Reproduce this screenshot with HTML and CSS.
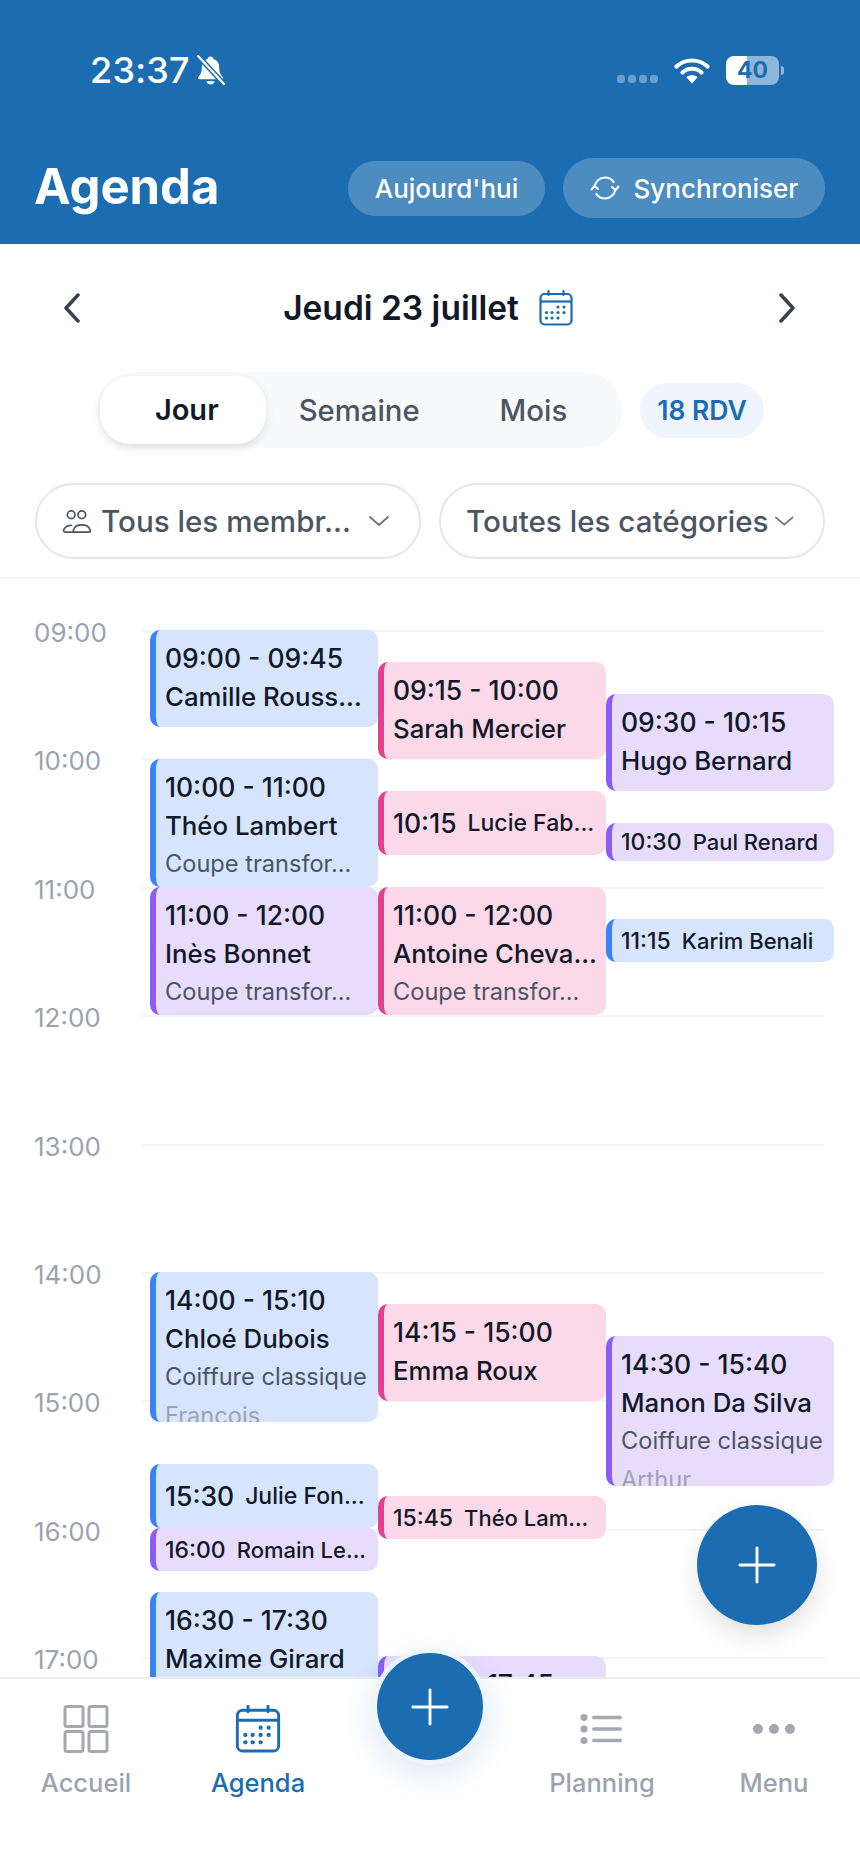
FILE: index.html
```html
<!DOCTYPE html>
<html lang="fr">
<head>
  <meta charset="UTF-8" />
  <meta name="viewport" content="width=device-width, initial-scale=1.0" />
  <title>Agenda</title>
  <link rel="stylesheet" href="styles.css">
</head>
<body>
  <div class="app">

    <header class="top">
      <div class="status">
        <div class="status-left">
          <span class="clock">23:37</span>
          <svg class="bell" viewBox="0 0 30 30">
            <path d="M15 1.500c-1.600 0-2.600 1-2.800 2.400C8.600 5 6.600 8 6.600 12c0 4.500-1.200 7-3.400 9.300-.8.9-.3 2.200 1 2.200h21.600c1.300 0 1.800-1.300 1-2.200-2.200-2.300-3.400-4.800-3.400-9.300 0-4-2-7-5.600-8.100C17.600 2.500 16.600 1.500 15 1.500z" fill="#fff"/>
            <path d="M11 25.500h8c-.4 2-2 3-4 3s-3.600-1-4-3z" fill="#fff"/>
            <path d="M3 1l25 27" stroke="#1b6cb0" stroke-width="5" fill="none"/>
            <path d="M3 1l25 27" stroke="#fff" stroke-width="2.200" fill="none" stroke-linecap="round"/>
          </svg>
        </div>
        <div class="status-right">
          <div class="signal"><i></i><i></i><i></i><i></i></div>
          <svg class="wifi" viewBox="0 0 36 27">
            <path d="M2.500 9.500C11 1.500 25 1.500 33.500 9.500" stroke="#fff" stroke-width="4.200" fill="none" stroke-linecap="round"/>
            <path d="M8.500 15.500c5.400-5 13.600-5 19 0" stroke="#fff" stroke-width="4.200" fill="none" stroke-linecap="round"/>
            <path d="M18 26.500l-5.600-6.200c3.200-2.600 8-2.600 11.200 0z" fill="#fff"/>
          </svg>
          <div class="battery"><span>40</span></div>
          <div class="battery-tip"></div>
        </div>
      </div>
      <div class="top-bar">
        <h1>Agenda</h1>
        <div class="top-actions">
          <button class="top-btn btn-today">Aujourd'hui</button>
          <button class="top-btn btn-sync">
            <svg class="sync-icon" viewBox="0 0 30 30" fill="none" stroke="#fff" stroke-width="2" stroke-linecap="round" stroke-linejoin="round">
              <path d="M4.500 13.500C5.500 8 10 4.500 15 4.500c3.600 0 6.700 1.700 8.700 4.600"/>
              <path d="M25.500 16.500c-1 5.500-5.500 9-10.500 9-3.600 0-6.700-1.700-8.700-4.600"/>
              <path d="M1.500 16.500l3-3.500 3.500 3"/>
              <path d="M28.500 13.500l-3 3.500-3.500-3"/>
            </svg>
            Synchroniser
          </button>
        </div>
      </div>
    </header>

    <div class="date-row">
      <svg class="chevron" viewBox="0 0 18 30"><path d="M15 2L3 15l12 13"/></svg>
      <div class="date-title">
        <span>Jeudi 23 juillet</span>
        <svg class="cal-small" viewBox="0 0 34 36">
          <use href="#cal"/>
        </svg>
      </div>
      <svg class="chevron" viewBox="0 0 18 30"><path d="M3 2l12 13L3 28"/></svg>
    </div>

    <div class="view-row">
      <div class="segments">
        <div class="segment active">Jour</div>
        <div class="segment week">Semaine</div>
        <div class="segment">Mois</div>
      </div>
      <div class="count">18 RDV</div>
    </div>

    <div class="filters">
      <div class="select select-members">
        <svg class="people" viewBox="0 0 30 26" fill="none" stroke="#4b5563" stroke-width="1.800" stroke-linecap="round" stroke-linejoin="round">
          <circle cx="9.500" cy="6" r="4"/>
          <circle cx="20.500" cy="6" r="4"/>
          <path d="M11 24H3.500c-2 0-2.500-1.500-1.500-3 1.200-2.200 3.500-4 7.500-4"/>
          <path d="M11 24h17c1.200 0 1.500-1 1-2.500-1-3-4-5-8.500-5s-7.500 2-8.500 5c-.5 1 0 2.500-1 2.500z"/>
        </svg>
        <span class="select-text">Tous les membr...</span>
        <svg class="caret" viewBox="0 0 22 12"><path d="M2 2l9 8 9-8"/></svg>
      </div>
      <div class="select select-categories">
        <span class="select-text">Toutes les catégories</span>
        <svg class="caret" viewBox="0 0 22 12"><path d="M2 2l9 8 9-8"/></svg>
      </div>
    </div>

    <div class="calendar">
      <div class="hours">
        <div class="hour"><span>09:00</span></div>
        <div class="hour"><span>10:00</span></div>
        <div class="hour"><span>11:00</span></div>
        <div class="hour"><span>12:00</span></div>
        <div class="hour"><span>13:00</span></div>
        <div class="hour"><span>14:00</span></div>
        <div class="hour"><span>15:00</span></div>
        <div class="hour"><span>16:00</span></div>
        <div class="hour"><span>17:00</span></div>
      </div>

      <div class="event blue col1" style="top:51px;height:97px">
        <div class="ev-time">09:00 - 09:45</div>
        <div class="ev-name">Camille Rouss...</div>
      </div>
      <div class="event pink col2" style="top:83px;height:97px">
        <div class="ev-time">09:15 - 10:00</div>
        <div class="ev-name">Sarah Mercier</div>
      </div>
      <div class="event purple col3" style="top:115px;height:97px">
        <div class="ev-time">09:30 - 10:15</div>
        <div class="ev-name">Hugo Bernard</div>
      </div>
      <div class="event blue col1" style="top:180px;height:128px">
        <div class="ev-time">10:00 - 11:00</div>
        <div class="ev-name">Théo Lambert</div>
        <div class="ev-sub">Coupe transfor...</div>
      </div>
      <div class="event pink col2 compact" style="top:212px;height:64px">
        <b>10:15</b><span>Lucie Fab...</span>
      </div>
      <div class="event purple col3 compact small" style="top:244px;height:38px">
        <b>10:30</b><span>Paul Renard</span>
      </div>
      <div class="event purple col1" style="top:308px;height:128px">
        <div class="ev-time">11:00 - 12:00</div>
        <div class="ev-name">Inès Bonnet</div>
        <div class="ev-sub">Coupe transfor...</div>
      </div>
      <div class="event pink col2" style="top:308px;height:128px">
        <div class="ev-time">11:00 - 12:00</div>
        <div class="ev-name">Antoine Cheva...</div>
        <div class="ev-sub">Coupe transfor...</div>
      </div>
      <div class="event blue col3 compact small" style="top:340px;height:43px">
        <b>11:15</b><span>Karim Benali</span>
      </div>
      <div class="event blue col1" style="top:693px;height:150px">
        <div class="ev-time">14:00 - 15:10</div>
        <div class="ev-name">Chloé Dubois</div>
        <div class="ev-sub">Coiffure classique</div>
        <div class="ev-staff">François</div>
      </div>
      <div class="event pink col2" style="top:725px;height:97px">
        <div class="ev-time">14:15 - 15:00</div>
        <div class="ev-name">Emma Roux</div>
      </div>
      <div class="event purple col3" style="top:757px;height:150px">
        <div class="ev-time">14:30 - 15:40</div>
        <div class="ev-name">Manon Da Silva</div>
        <div class="ev-sub">Coiffure classique</div>
        <div class="ev-staff">Arthur</div>
      </div>
      <div class="event blue col1 compact" style="top:885px;height:64px">
        <b>15:30</b><span>Julie Fon...</span>
      </div>
      <div class="event pink col2 compact small" style="top:917px;height:43px">
        <b>15:45</b><span>Théo Lam...</span>
      </div>
      <div class="event purple col1 compact small" style="top:949px;height:43px">
        <b>16:00</b><span>Romain Le...</span>
      </div>
      <div class="event blue col1" style="top:1013px;height:128px">
        <div class="ev-time">16:30 - 17:30</div>
        <div class="ev-name">Maxime Girard</div>
      </div>
      <div class="event purple col2" style="top:1077px;height:97px">
        <div class="ev-time">17:00 - 17:45</div>
      </div>
    </div>

    <nav class="tabs">
      <div class="tab">
        <svg class="tab-icon" viewBox="0 0 48 48" fill="none" stroke="#a3a8b3" stroke-width="3">
          <rect x="3" y="1.500" width="18" height="20" rx="2"/>
          <rect x="27" y="1.500" width="18" height="20" rx="2"/>
          <rect x="3" y="26.500" width="18" height="20" rx="2"/>
          <rect x="27" y="26.500" width="18" height="20" rx="2"/>
        </svg>
        <span>Accueil</span>
      </div>
      <div class="tab current">
        <svg class="tab-icon" viewBox="0 0 34 36"><use href="#cal"/></svg>
        <span>Agenda</span>
      </div>
      <div class="tab"></div>
      <div class="tab">
        <svg class="tab-icon" viewBox="0 0 48 48" fill="#a3a8b3">
          <circle cx="6" cy="12.500" r="3.500"/><circle cx="6" cy="24" r="3.500"/><circle cx="6" cy="35.500" r="3.500"/>
          <rect x="14" y="10.800" width="30" height="3.400" rx="1.700"/>
          <rect x="14" y="22.300" width="30" height="3.400" rx="1.700"/>
          <rect x="14" y="33.800" width="30" height="3.400" rx="1.700"/>
        </svg>
        <span>Planning</span>
      </div>
      <div class="tab">
        <svg class="tab-icon" viewBox="0 0 48 48" fill="#a3a8b3">
          <circle cx="8" cy="24" r="5"/><circle cx="24" cy="24" r="5"/><circle cx="40" cy="24" r="5"/>
        </svg>
        <span>Menu</span>
      </div>
    </nav>

    <div class="fab fab-float">
      <svg viewBox="0 0 40 40"><path d="M20 2v36M2 20h36"/></svg>
    </div>
    <div class="fab fab-tab">
      <svg viewBox="0 0 40 40"><path d="M20 2v36M2 20h36"/></svg>
    </div>
  </div>

  <svg class="defs" width="0" height="0">
    <symbol id="cal" viewBox="0 0 34 36">
      <path d="M9.500 1v4M24.500 1v4" stroke="#1b6cb0" stroke-width="2.200" stroke-linecap="round" fill="none"/>
      <rect x="1.500" y="4" width="31" height="30.500" rx="4" stroke="#1b6cb0" stroke-width="2.200" fill="none"/>
      <path d="M1.500 11.500h31" stroke="#1b6cb0" stroke-width="2.200" fill="none"/>
      <g fill="#1b6cb0">
        <circle cx="19" cy="17" r="1.600"/><circle cx="25" cy="17" r="1.600"/>
        <circle cx="7.500" cy="22.500" r="1.600"/><circle cx="13" cy="22.500" r="1.600"/><circle cx="19" cy="22.500" r="1.600"/><circle cx="25" cy="22.500" r="1.600"/>
        <circle cx="7.500" cy="28" r="1.600"/><circle cx="13" cy="28" r="1.600"/><circle cx="19" cy="28" r="1.600"/>
      </g>
    </symbol>
  </svg>
</body>
</html>
```

FILE: styles.css
```css
/* Page */
html, body {
  margin: 0;
  padding: 0;
}

body {
  font-family: Inter, "Liberation Sans", sans-serif;
  color: #111827;
  background-color: #fff;
}

.app {
  position: relative;
  width: 860px;
  height: 1869px;
  overflow: hidden;
  display: flex;
  flex-direction: column;
}

.defs {
  position: absolute;
}

/* Blue header */
.top {
  background-color: #1b6cb0;
  height: 244px;
  flex: none;
  color: #fff;
}

.status {
  display: flex;
  justify-content: space-between;
  padding: 50px 76px 0 90px;
  height: 40px;
}

.status-left {
  display: flex;
  align-items: center;
  gap: 5px;
}

.clock {
  font-size: 36px;
  font-weight: 500;
  line-height: 40px;
  letter-spacing: 0.2px;
}

.bell {
  width: 31px;
  height: 31px;
}

.status-right {
  display: flex;
  align-items: center;
}

.signal {
  display: flex;
  gap: 3px;
  margin: 18px 16px 0 0;
}

.signal i {
  width: 8px;
  height: 8px;
  border-radius: 3px;
  background-color: rgba(255, 255, 255, 0.35);
}

.wifi {
  width: 36px;
  height: 27px;
  margin-right: 16px;
}

.battery {
  width: 53px;
  height: 29px;
  border-radius: 8px;
  background: linear-gradient(to right, #fff 0, #fff 40%, rgba(255, 255, 255, 0.5) 40%);
  color: #1b6cb0;
  font-size: 23px;
  font-weight: 700;
  line-height: 29px;
  text-align: center;
}

.battery-tip {
  width: 3px;
  height: 9px;
  margin-left: 2px;
  border-radius: 0 3px 3px 0;
  background-color: rgba(255, 255, 255, 0.5);
}

.top-bar {
  display: flex;
  justify-content: space-between;
  align-items: center;
  padding: 68px 35px 0 34px;
}

.top-bar h1 {
  margin: -3px 0 0;
  font-size: 49px;
  font-weight: 700;
  line-height: 60px;
}

.top-actions {
  display: flex;
  align-items: center;
  gap: 18px;
}

.top-btn {
  display: flex;
  align-items: center;
  justify-content: center;
  border: none;
  border-radius: 28px;
  background-color: rgba(255, 255, 255, 0.22);
  color: #fff;
  font-family: inherit;
  font-size: 26px;
  font-weight: 500;
  padding: 0;
}

.btn-today {
  width: 197px;
  height: 55px;
}

.btn-sync {
  width: 262px;
  height: 60px;
  border-radius: 30px;
  gap: 14px;
}

.sync-icon {
  width: 30px;
  height: 30px;
}

/* Date row */
.date-row {
  display: flex;
  align-items: center;
  justify-content: space-between;
  height: 36px;
  padding: 46px 64px 0 63px;
  flex: none;
}

.chevron {
  width: 18px;
  height: 30px;
  fill: none;
  stroke: #374151;
  stroke-width: 3.500;
  stroke-linecap: round;
  stroke-linejoin: round;
}

.date-title {
  display: flex;
  align-items: center;
  gap: 20px;
  margin-right: 3px;
  font-size: 33.500px;
  font-weight: 600;
}

.cal-small {
  width: 34px;
  height: 36px;
}

/* Jour / Semaine / Mois */
.view-row {
  display: flex;
  align-items: center;
  padding: 46px 0 0 97px;
  gap: 18px;
  flex: none;
}

.segments {
  display: flex;
  align-items: center;
  width: 525px;
  height: 76px;
  border-radius: 38px;
  background-color: #f8f9fb;
  box-sizing: border-box;
  padding: 0 3px;
  font-size: 29.300px;
  font-weight: 500;
  color: #4b5563;
}

.segment {
  width: 175px;
  text-align: center;
}

.segment.week {
  width: 181px;
}

.segment.active {
  box-sizing: border-box;
  width: 169px;
  height: 68px;
  margin-right: 5px;
  padding-left: 8px;
  line-height: 68px;
  border-radius: 30px;
  background-color: #fff;
  color: #111827;
  font-size: 29px;
  font-weight: 600;
  box-shadow: 0 4px 10px rgba(0, 0, 0, 0.1);
}

.count {
  width: 124px;
  height: 55px;
  line-height: 55px;
  border-radius: 28px;
  text-align: center;
  background-color: #eef5fc;
  color: #1b6cb0;
  font-size: 26.500px;
  font-weight: 600;
}

/* Filtres */
.filters {
  display: grid;
  grid-template-columns: 386px 386px;
  gap: 18px;
  padding: 35px 35px 0 35px;
  flex: none;
}

.select {
  display: flex;
  align-items: center;
  box-sizing: border-box;
  height: 76px;
  border: 2px solid #e5e7eb;
  border-radius: 38px;
  padding: 0 29px 0 25px;
  font-size: 29.600px;
  font-weight: 500;
  color: #4b5563;
}

.select-members {
  gap: 10px;
}

.select-categories {
  gap: 5px;
}

.select-text {
  flex: 1;
  white-space: nowrap;
}

.people {
  width: 29px;
  height: 25px;
}

.caret {
  width: 22px;
  height: 12px;
  fill: none;
  stroke: #6b7280;
  stroke-width: 1.800;
  stroke-linecap: round;
  stroke-linejoin: round;
}

/* Grille du calendrier */
.calendar {
  position: relative;
  flex: 1;
  margin-top: 18px;
  border-top: 2px solid #f3f4f6;
  overflow: hidden;
}

.hours {
  padding-top: 51px;
}

.hour {
  position: relative;
  height: 126.400px;
  margin-left: 142px;
  margin-right: 35px;
  border-top: 2px solid #f3f4f6;
}

.hour span {
  position: absolute;
  left: -108px;
  top: -17px;
  font-size: 26px;
  line-height: 36px;
  color: #9ca3af;
}

.event {
  position: absolute;
  box-sizing: border-box;
  width: 228px;
  border-left: 6px solid;
  border-radius: 10px;
  padding: 9px 5px 0 9px;
  overflow: hidden;
  white-space: nowrap;
}

.col1 { left: 150px; }
.col2 { left: 378px; }
.col3 { left: 606px; }

.blue {
  background-color: #d6e4fd;
  border-left-color: #3b82f6;
}

.pink {
  background-color: #fbd9e9;
  border-left-color: #e0428f;
}

.purple {
  background-color: #e8dcfd;
  border-left-color: #8b5cf6;
}

.ev-time,
.ev-name {
  font-size: 25.800px;
  font-weight: 500;
  line-height: 38.500px;
}

.ev-time {
  font-size: 26.500px;
}

.ev-sub,
.ev-staff {
  font-size: 23.600px;
  line-height: 38.500px;
  color: #4b5563;
}

.ev-staff {
  color: #9ca3af;
}

.compact {
  display: flex;
  align-items: center;
  gap: 11px;
  padding-top: 0;
  font-size: 23px;
  font-weight: 500;
}

.compact b {
  font-size: 26.500px;
  font-weight: 500;
}

.compact.small {
  font-size: 22px;
  gap: 11px;
}

.compact.small b {
  font-size: 23px;
}

/* Barre du bas */
.tabs {
  position: relative;
  display: grid;
  grid-template-columns: repeat(5, 172px);
  height: 192px;
  flex: none;
  box-sizing: border-box;
  background-color: #fff;
  border-top: 2px solid #eceef1;
}

.tab {
  display: flex;
  flex-direction: column;
  align-items: center;
  padding-top: 26px;
  font-size: 25.500px;
  font-weight: 500;
  color: #9ca3af;
}

.tab.current {
  color: #1b6cb0;
}

.tab-icon {
  width: 48px;
  height: 48px;
  margin-bottom: 14px;
}

.fab {
  position: absolute;
  display: flex;
  align-items: center;
  justify-content: center;
  border-radius: 50%;
  background-color: #1b6cb0;
}

.fab svg {
  width: 38px;
  height: 38px;
  fill: none;
  stroke: #fff;
  stroke-width: 3;
  stroke-linecap: round;
}

.fab-float {
  left: 697px;
  top: 1505px;
  width: 120px;
  height: 120px;
  box-shadow: 0 10px 24px rgba(0, 0, 0, 0.12);
}

.fab-tab {
  left: 377px;
  top: 1653px;
  width: 106px;
  height: 107px;
  box-shadow: 0 0 0 5px rgba(238, 245, 250, 0.9), 0 10px 30px 6px rgba(27, 108, 176, 0.14);
}
```
